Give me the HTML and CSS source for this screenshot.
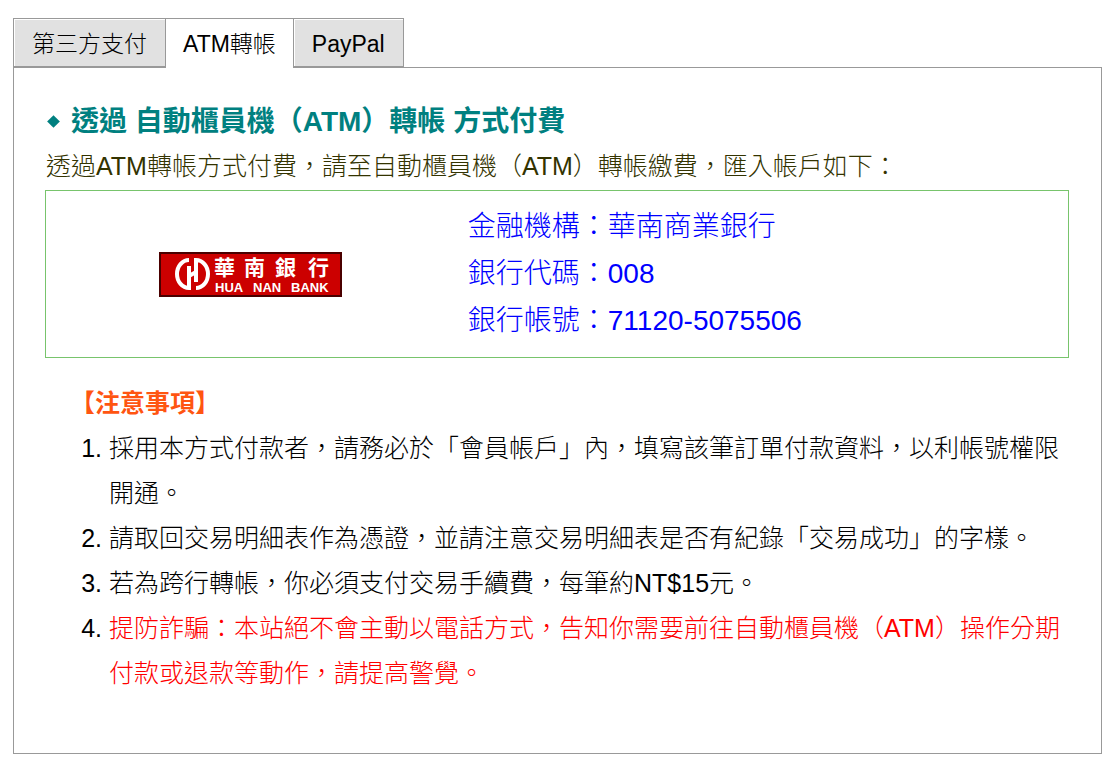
FILE: index.html
```
<!DOCTYPE html>
<html lang="zh-Hant">
  <head>
    <meta charset="utf-8">
    <meta name="viewport" content="width=device-width, initial-scale=1">
    <title>付費方式</title>
    <link rel="stylesheet" href="styles.css">
  </head>
  <body>
    <div class="tabs" role="tablist">
      <button type="button" class="tab" role="tab" aria-selected="false">第三方支付</button>
      <button type="button" class="tab active" role="tab" id="tab-atm" aria-selected="true" aria-controls="atm">ATM轉帳</button>
      <button type="button" class="tab" role="tab" aria-selected="false">PayPal</button>
    </div>
    <main id="atm" class="panel" role="tabpanel" aria-labelledby="tab-atm">
      <h1>透過 自動櫃員機（ATM）轉帳 方式付費</h1>
      <p class="intro">透過ATM轉帳方式付費，請至自動櫃員機（ATM）轉帳繳費，匯入帳戶如下：</p>
      <div class="bank">
        <div class="bank-logo">
          <svg width="183" height="45" viewBox="0 0 183 45" role="img" aria-label="華南銀行 HUA NAN BANK">
            <rect class="logo-bg" x="1" y="1" width="181" height="43"/>
            <g class="logo-mark">
              <path d="M30 8 A12 14 0 0 0 30 36 V14"/>
              <path d="M37 36 A12 14 0 0 0 37 8 V30"/>
              <path d="M30 24 L37 20"/>
            </g>
            <g class="logo-zh">
              <text x="55" y="23">華</text>
              <text x="85" y="23">南</text>
              <text x="116" y="23">銀</text>
              <text x="149" y="23">行</text>
            </g>
            <g class="logo-en">
              <text x="56" y="40">HUA</text>
              <text x="94" y="40">NAN</text>
              <text x="132" y="40">BANK</text>
            </g>
          </svg>
        </div>
        <div class="bank-info">
          <div>金融機構：華南商業銀行</div>
          <div>銀行代碼：008</div>
          <div>銀行帳號：71120-5075506</div>
        </div>
      </div>
      <section class="notices">
        <h2>【注意事項】</h2>
        <ol>
          <li>採用本方式付款者，請務必於「會員帳戶」內，填寫該筆訂單付款資料，以利帳號權限開通。</li>
          <li>請取回交易明細表作為憑證，並請注意交易明細表是否有紀錄「交易成功」的字樣。</li>
          <li>若為跨行轉帳，你必須支付交易手續費，每筆約NT$15元。</li>
          <li><span class="warning">提防詐騙：本站絕不會主動以電話方式，告知你需要前往自動櫃員機（ATM）操作分期付款或退款等動作，請提高警覺。</span></li>
        </ol>
      </section>
    </main>
  </body>
</html>
```

FILE: styles.css
```
* {
  box-sizing: border-box;
}

body {
  margin: 18px 15px 19px 13px;
  color: #000000;
  background: #FFFFFF;
  font-family: "Liberation Sans", "Noto Sans CJK TC", sans-serif;
  font-size: 25px;
  font-weight: 300;
  line-height: 45px;
}

h1,
h2,
p,
ol {
  margin: 0;
}

.tabs {
  display: flex;
}

.tab {
  height: 49px;
  padding: 3px 18px 0;
  border: 1px solid #999999;
  border-left: none;
  background: #E1E1E1;
  box-shadow: inset 1px 1px 0 #FFFFFF;
  color: #000000;
  font: inherit;
  font-size: 23px;
  cursor: pointer;
}

.tab:first-child {
  border-left: 1px solid #999999;
}

/* covers the top border of the panel */
.tab.active {
  position: relative;
  height: 50px;
  margin-bottom: -1px;
  padding: 2px 17px 0;
  border-bottom: none;
  background: #FFFFFF;
}

.panel {
  padding: 31px 32px 57px;
  border: 1px solid #999999;
}

h1 {
  display: flex;
  align-items: center;
  gap: 13px;
  padding-left: 3px;
  color: #008080;
  font-size: 28px;
  font-weight: bold;
}

/* diamond bullet */
h1:before {
  content: "";
  width: 9px;
  height: 9px;
  background: #008080;
  transform: rotate(45deg);
}

.intro {
  color: #333300;
}

.bank {
  display: grid;
  grid-template-columns: 2fr 3fr;
  align-items: center;
  margin: 1px 0 23px -1px;
  border: 1px solid #78C46C;
}

.bank-logo {
  display: flex;
  justify-content: center;
}

.bank-info {
  padding: 12px 0 13px 13px;
  color: #0000FF;
  font-size: 28px;
  line-height: 47px;
}

.logo-bg {
  fill: #CC0000;
  stroke: #4A0000;
  stroke-width: 2px;
}

.logo-mark {
  fill: none;
  stroke: #FFFFFF;
  stroke-width: 4px;
}

.logo-zh {
  fill: #FFFFFF;
  font-family: "Noto Sans CJK TC", sans-serif;
  font-size: 21px;
  font-weight: bold;
}

.logo-en {
  fill: #FFFFFF;
  font-size: 13px;
  font-weight: bold;
}

.notices h2 {
  padding-left: 24px;
  color: #FF5511;
  font-size: 25px;
  font-weight: bold;
}

.notices ol {
  padding-left: 63px;
}

.warning {
  color: #FF0000;
}
```
